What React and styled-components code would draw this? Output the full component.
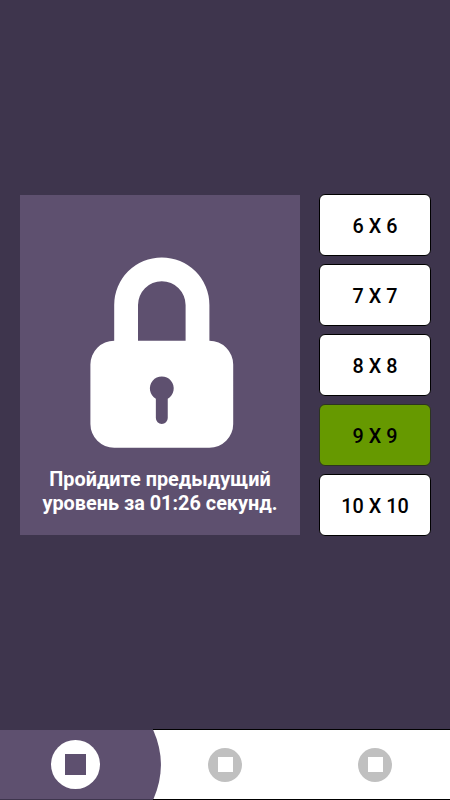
import styled, { createGlobalStyle } from "styled-components";

const sizes = [6, 7, 8, 9, 10];
const selectedSize = 9;

export default function App() {
  return (
    <>
      <GlobalStyle />
      <Screen>
        <Content>
          <LockedPanel>
            <LockIcon />
            <Message>
              Пройдите предыдущий
              <br />
              уровень за 01:26 секунд.
            </Message>
          </LockedPanel>

          <SizeList>
            {sizes.map((size) => (
              <SizeButton key={size} $selected={size === selectedSize}>
                {size} X {size}
              </SizeButton>
            ))}
          </SizeList>
        </Content>

        <TabBar>
          <ActiveTab>
            <ActiveShape />
            <TabIcon $active />
          </ActiveTab>
          <Tab>
            <TabIcon />
          </Tab>
          <Tab>
            <TabIcon />
          </Tab>
        </TabBar>
      </Screen>
    </>
  );
}

function LockIcon() {
  return (
    <LockSvg viewBox="0 0 144 192">
      <path
        fill="#fff"
        fillRule="evenodd"
        transform="translate(.4 .4) scale(11.9)"
        d="M2 7V4a4 4 0 0 1 8 0v3a2 2 0 0 1 2 2v5a2 2 0 0 1-2 2H2a2 2 0 0 1-2-2V9a2 2 0 0 1 2-2ZM4 7h4V4a2 2 0 0 0-4 0ZM5.5 11.87v1.630a.5.5 0 0 0 1 0v-1.630a1 1 0 1 0-1 0Z"
      />
    </LockSvg>
  );
}

// the selected tab bulges out to the right and covers the bar's border
function ActiveShape() {
  return (
    <ActiveSvg viewBox="0 0 162 71">
      <path fill="#3e354d" d="M0 0H153V1H0Z" />
      <path fill="#5e506f" d="M0 1H153.200Q168.500 35.500 153.500 70H0Z" />
      <path fill="#3e354d" d="M0 70H153V71H0Z" />
    </ActiveSvg>
  );
}

const GlobalStyle = createGlobalStyle`
  body {
    margin: 0;
    background-color: #3e354d;
    font-family: Roboto, sans-serif;
  }
`;

const Screen = styled.div`
  display: flex;
  flex-direction: column;
  height: 800px;
  background-color: #3e354d;
`;

const Content = styled.main`
  display: flex;
  flex: 1;
  align-items: flex-start;
  gap: 19px;
  padding: 194px 19px 0 20px;
`;

const LockedPanel = styled.section`
  display: flex;
  flex-direction: column;
  align-items: center;
  box-sizing: border-box;
  width: 280px;
  height: 340px;
  margin-top: 1px;
  padding-top: 62px;
  background-color: #5e506f;
`;

const LockSvg = styled.svg`
  display: block;
  flex-shrink: 0;
  width: 144px;
  height: 192px;
  margin-left: 4px;
`;

const Message = styled.p`
  margin: 19px 0 0;
  color: #fff;
  font-size: 19.85px;
  font-weight: 700;
  line-height: 24px;
  text-align: center;
  white-space: nowrap;
`;

const SizeList = styled.div`
  display: flex;
  flex-direction: column;
  gap: 8px;
`;

const SizeButton = styled.button`
  box-sizing: border-box;
  width: 112px;
  height: 62px;
  padding: 2px 0 0;
  border: 1px solid ${({ $selected }) => ($selected ? "#2c3420" : "#000")};
  border-radius: 6px;
  background-color: ${({ $selected }) => ($selected ? "#669900" : "#fff")};
  color: #000;
  font-family: inherit;
  font-size: 19.8px;
  font-weight: 500;
`;

const TabBar = styled.nav`
  display: grid;
  grid-template-columns: repeat(3, 1fr);
  box-sizing: border-box;
  height: 71px;
  border-top: 1px solid #000;
  border-bottom: 1px solid #000;
  background-color: #fff;
`;

const Tab = styled.div`
  display: flex;
  justify-content: center;
  align-items: center;
`;

const ActiveTab = styled(Tab)`
  position: relative;
`;

const ActiveSvg = styled.svg`
  position: absolute;
  top: -1px;
  left: 0;
  width: 162px;
  height: 71px;
`;

const TabIcon = styled.span`
  position: relative;
  display: flex;
  justify-content: center;
  align-items: center;
  width: ${({ $active }) => ($active ? 49 : 34)}px;
  height: ${({ $active }) => ($active ? 49 : 34)}px;
  border-radius: 50%;
  background-color: ${({ $active }) => ($active ? "#fff" : "#c0c0c0")};

  &::after {
    content: "";
    width: ${({ $active }) => ($active ? 21 : 15)}px;
    height: ${({ $active }) => ($active ? 21 : 15)}px;
    background-color: ${({ $active }) => ($active ? "#5e506f" : "#fff")};
  }
`;
